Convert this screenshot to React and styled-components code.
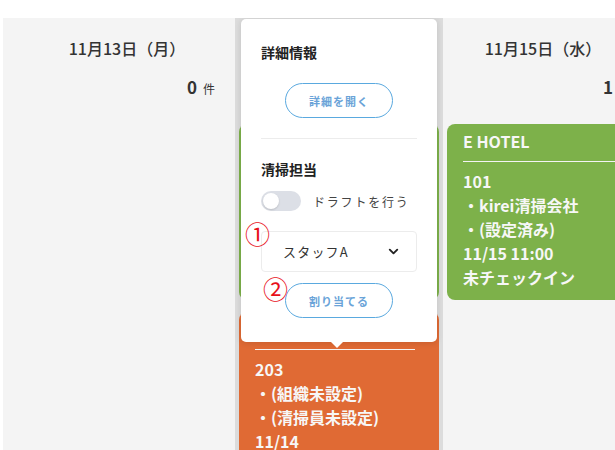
import React from 'react';
import styled, { createGlobalStyle } from 'styled-components';
import { ChevronDown } from 'lucide-react';

const Global = createGlobalStyle`
  html, body { margin: 0; padding: 0; background: #fff; }
  body { font-family: "Noto Sans CJK JP", "Noto Sans", sans-serif; overflow: hidden; }
`;

const Page = styled.div`
  margin: 18px 0 0 3px;
  height: 432px;
  background: #f4f4f4;
  display: flex;
  overflow: hidden;
`;

const Gutter = styled.div`
  flex: 0 0 24px;
`;

const Column = styled.div`
  flex: 0 0 208px;
  position: relative;
  padding: 0 4px;
  box-sizing: border-box;
  background: ${p => (p.$active ? '#dcdcdc' : 'transparent')};
  display: flex;
  flex-direction: column;
`;

const DateHeader = styled.div`
  padding: 18px 8px 0 0;
  line-height: 24px;
  font-size: 16px;
  font-weight: 500;
  color: #333;
  text-align: center;
  white-space: nowrap;
`;

const Count = styled.div`
  margin-top: 15px;
  padding-right: 16px;
  line-height: 24px;
  text-align: right;
  color: #333;
  white-space: nowrap;
  b { font-size: 17px; font-weight: 700; }
  span { font-size: 12px; margin-left: 6px; }
`;

const CardList = styled.div`
  margin-top: 23px;
  display: flex;
  flex-direction: column;
  gap: 12px;
`;

const Card = styled.div`
  background: ${p => p.$color};
  border-radius: 8px;
  padding: 5px 24px 11px 16px;
  color: #f7f7f7;
  font-size: 16px;
  font-weight: 700;
  line-height: 24px;
  white-space: nowrap;
`;

const CardRule = styled.div`
  height: 1px;
  background: #f3f3f3;
  margin: 8px 0 7px;
`;

const Popover = styled.div`
  position: absolute;
  left: 6px;
  top: 1px;
  width: 196px;
  box-sizing: border-box;
  padding: 23px 20px 24px;
  background: #fff;
  border-radius: 5px;
  box-shadow: 0 1px 6px rgba(0, 0, 0, 0.12);
  z-index: 5;
  &::after {
    content: '';
    position: absolute;
    left: 90px;
    bottom: -6px;
    border-left: 6px solid transparent;
    border-right: 6px solid transparent;
    border-top: 6px solid #fff;
  }
`;

const Section = styled.div`
  display: flex;
  flex-direction: column;
  padding: ${p => (p.$first ? '0 0 20px' : '20px 0 0')};
  border-bottom: ${p => (p.$first ? '1px solid #ececec' : 'none')};
`;

const SectionTitle = styled.div`
  font-size: 14px;
  font-weight: 700;
  line-height: 20px;
  color: #222;
`;

const PillButton = styled.button`
  align-self: center;
  margin-top: ${p => p.$mt}px;
  width: 108px;
  height: 35px;
  border: 1px solid #5aa9df;
  border-radius: 18px;
  background: #fff;
  color: #6aa3d8;
  font-family: inherit;
  font-size: 11px;
  font-weight: 700;
  letter-spacing: 1px;
  padding: 0;
`;

const ToggleRow = styled.div`
  margin-top: 12px;
  display: flex;
  align-items: center;
  gap: 12px;
  height: 20px;
`;

const Track = styled.div`
  width: 40px;
  height: 20px;
  border-radius: 10px;
  background: #dcdfe6;
  display: flex;
  align-items: center;
  padding: 0 2px;
  box-sizing: border-box;
`;

const Knob = styled.div`
  width: 16px;
  height: 16px;
  border-radius: 50%;
  background: #fff;
  box-shadow: 0 1px 2px rgba(0, 0, 0, 0.15);
`;

const ToggleLabel = styled.span`
  font-size: 12px;
  letter-spacing: 1.8px;
  color: #444;
`;

const Select = styled.div`
  margin-top: 20px;
  height: 41px;
  box-sizing: border-box;
  border: 1px solid #ececec;
  border-radius: 4px;
  display: flex;
  align-items: center;
  justify-content: space-between;
  padding: 0 15px 0 21px;
  font-size: 13px;
  letter-spacing: 1.2px;
  color: #333;
`;

const Marker = styled.span`
  position: absolute;
  left: ${p => p.$x}px;
  top: ${p => p.$y}px;
  font-size: 25px;
  line-height: 25px;
  color: #e8101a;
  font-family: "Noto Sans CJK JP", sans-serif;
`;

export default function App() {
  return (
    <>
      <Global />
      <Page>
        <Gutter />
        <Column>
          <DateHeader>11月13日（月）</DateHeader>
          <Count><b>0</b><span>件</span></Count>
        </Column>
        <Column $active>
          <DateHeader>11月14日（火）</DateHeader>
          <Count><b>2</b><span>件</span></Count>
          <CardList>
            <Card $color="#7db14a">
              <div>D HOTEL</div>
              <CardRule />
              <div>102</div>
              <div>・kirei清掃会社</div>
              <div>・(設定済み)</div>
              <div>11/14 11:00</div>
              <div>未チェックイン</div>
            </Card>
            <Card $color="#e06a34">
              <div>D HOTEL</div>
              <CardRule />
              <div>203</div>
              <div>・(組織未設定)</div>
              <div>・(清掃員未設定)</div>
              <div>11/14</div>
              <div>未チェックイン</div>
            </Card>
          </CardList>
          <Popover>
            <Section $first>
              <SectionTitle>詳細情報</SectionTitle>
              <PillButton $mt={21}>詳細を開く</PillButton>
            </Section>
            <Section>
              <SectionTitle>清掃担当</SectionTitle>
              <ToggleRow>
                <Track><Knob /></Track>
                <ToggleLabel>ドラフトを行う</ToggleLabel>
              </ToggleRow>
              <Select>
                <span>スタッフA</span>
                <ChevronDown size={15} strokeWidth={3} color="#222" />
              </Select>
              <PillButton $mt={11}>割り当てる</PillButton>
            </Section>
            <Marker $x={4} $y={202}>①</Marker>
            <Marker $x={22} $y={257}>②</Marker>
          </Popover>
        </Column>
        <Column>
          <DateHeader>11月15日（水）</DateHeader>
          <Count><b>1</b><span>件</span></Count>
          <CardList>
            <Card $color="#7db14a">
              <div>E HOTEL</div>
              <CardRule />
              <div>101</div>
              <div>・kirei清掃会社</div>
              <div>・(設定済み)</div>
              <div>11/15 11:00</div>
              <div>未チェックイン</div>
            </Card>
          </CardList>
        </Column>
      </Page>
    </>
  );
}
